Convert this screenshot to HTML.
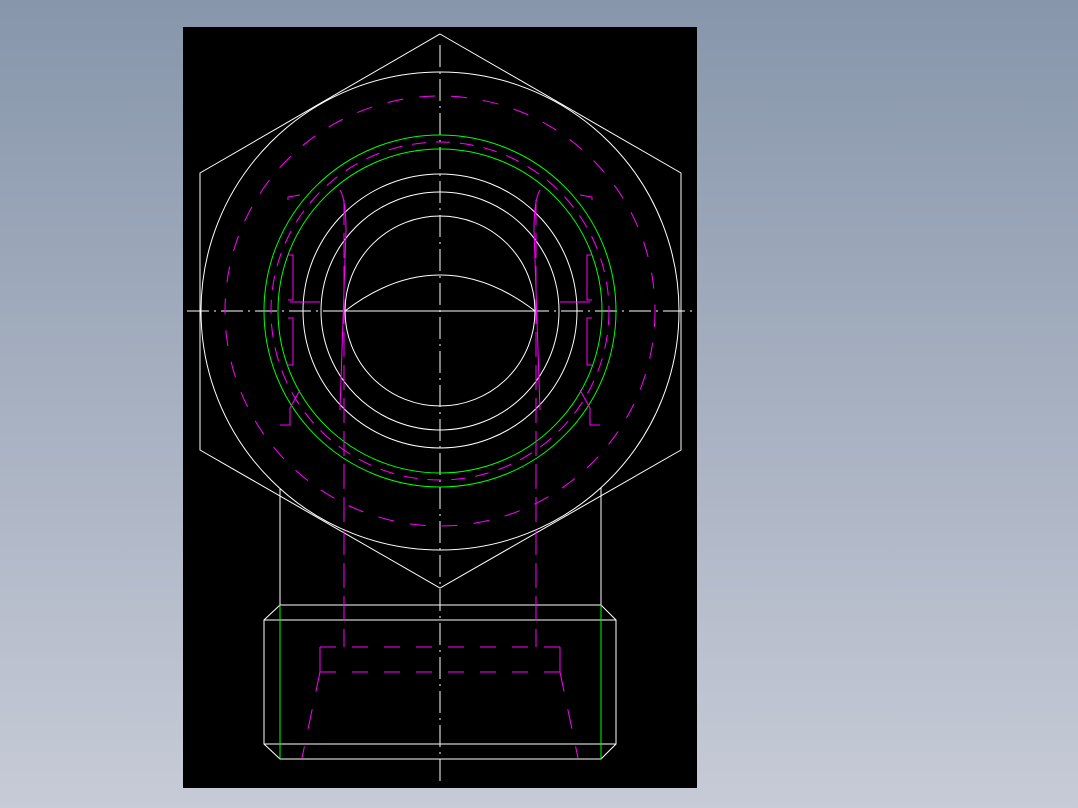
<!DOCTYPE html>
<html><head><meta charset="utf-8"><style>
html,body{margin:0;padding:0;width:1078px;height:808px;overflow:hidden;background:linear-gradient(#8796ab,#c7cbd7);}
svg{position:absolute;left:0;top:0;}
</style></head><body>
<svg width="1078" height="808" viewBox="0 0 1078 808" xmlns="http://www.w3.org/2000/svg">
<rect x="183" y="27" width="514" height="761" fill="#000"/>
<g fill="none" stroke="#fff" stroke-width="1">
<polygon points="440,34 681,173 681,450 440,588 200,450 200,173"/>
<circle cx="440" cy="311" r="239"/>
<circle cx="440" cy="311" r="137"/>
<circle cx="440" cy="311" r="119"/>
<circle cx="440" cy="311" r="95"/>
<path d="M345,311 Q392,275 440,275 Q488,275 535,311 Z"/>
<line x1="280" y1="488" x2="280" y2="605"/>
<line x1="601" y1="488" x2="601" y2="605"/>
<polygon points="280,605 601,605 616,620 616,744 601,759 280,759 264,744 264,620"/>
<line x1="264" y1="620" x2="616" y2="620"/>
<line x1="264" y1="744" x2="616" y2="744"/>
<line x1="187" y1="311" x2="697" y2="311" stroke-dasharray="22,5,2,5"/>
<line x1="440" y1="45" x2="440" y2="785" stroke-dasharray="22,5,2,5"/>
</g>
<g fill="none" stroke="#00ff00" stroke-width="1">
<circle cx="440" cy="311" r="176"/>
<circle cx="440" cy="311" r="162"/>
<line x1="280" y1="605" x2="280" y2="759"/>
<line x1="601" y1="605" x2="601" y2="759"/>
</g>
<g fill="none" stroke="#ff00ff" stroke-width="1">
<circle cx="440" cy="311" r="215" stroke-dasharray="16,16"/>
<circle cx="440" cy="311" r="169" stroke-dasharray="14,10"/>
<line x1="344" y1="200" x2="344" y2="647" stroke-dasharray="25,8"/>
<line x1="536" y1="200" x2="536" y2="647" stroke-dasharray="25,8"/>
<path d="M340,190 Q346,200 346,230 L340,410"/>
<path d="M540,190 Q534,200 534,230 L540,410"/>
<path d="M288,200 L288,197 L300,195"/>
<path d="M592,200 L592,197 L580,195"/>
<path d="M280,425 L290,425 L290,408 L300,390"/>
<path d="M600,425 L590,425 L590,408 L580,390"/>
<path d="M288,255 L293,255 L293,300 L288,300 M288,318 L293,318 L293,365 L288,365"/>
<path d="M592,255 L587,255 L587,300 L592,300 M592,318 L587,318 L587,365 L592,365"/>
<path d="M290,302 L320,302 M560,302 L590,302"/>
<path d="M320,647 L560,647" stroke-dasharray="16,16"/>
<path d="M320,672 L560,672" stroke-dasharray="16,16"/>
<line x1="320" y1="647" x2="320" y2="672"/>
<line x1="560" y1="647" x2="560" y2="672"/>
<line x1="320" y1="672" x2="302" y2="758" stroke-dasharray="20,18"/>
<line x1="560" y1="672" x2="578" y2="758" stroke-dasharray="20,18"/>
</g>
</svg>
</body></html>
